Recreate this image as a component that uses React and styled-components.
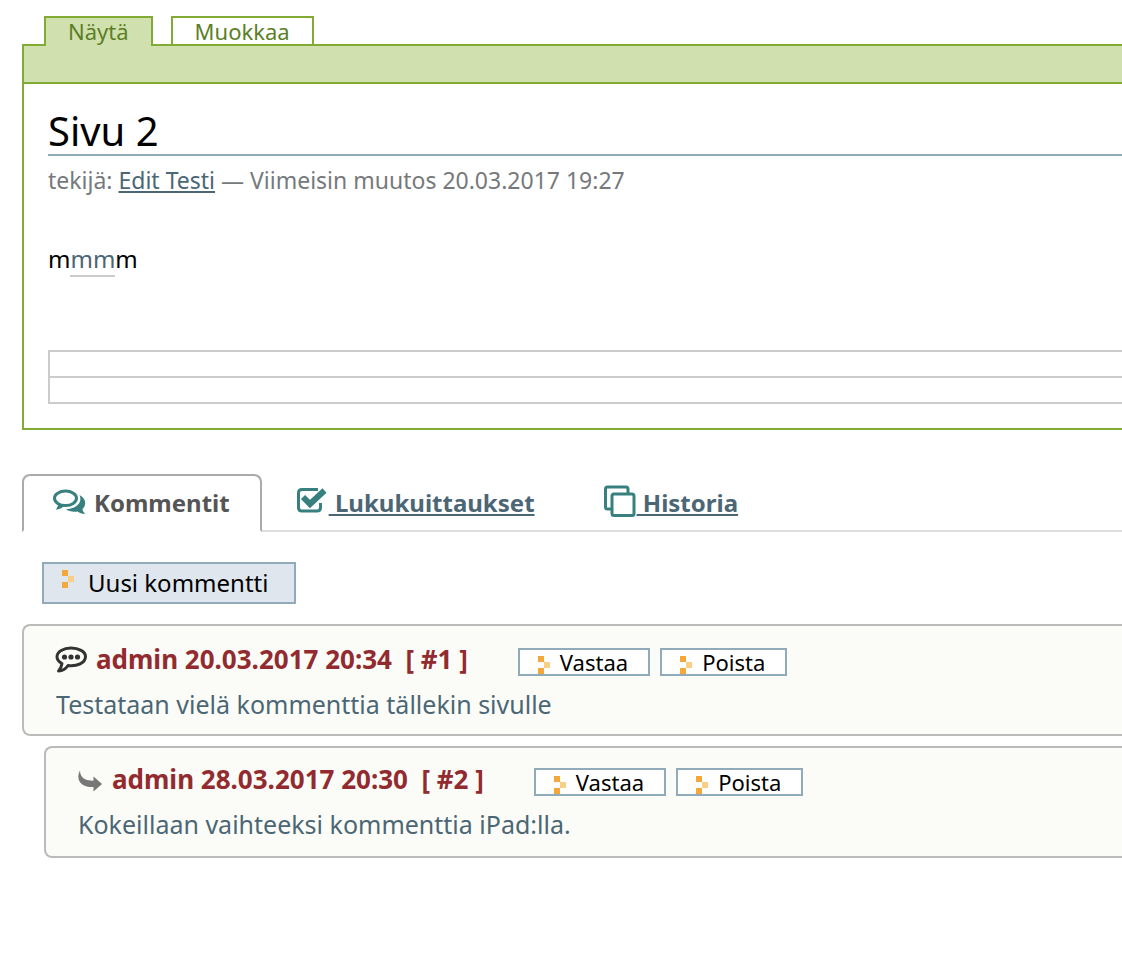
import React from 'react';
import styled, { createGlobalStyle } from 'styled-components';

const Global = createGlobalStyle`
  * { box-sizing: border-box; }
  body { margin: 0; background: #fff; color: #000; font-family: "Noto Sans", sans-serif; font-size: 24px; line-height: 32px; overflow-x: hidden; }
  a { color: #4b6675; }
  h1, h2, p { margin: 0; font-weight: 400; }
`;

const Page = styled.main`padding: 16px 0 32px 22px;`;

const ViewTabs = styled.nav`
  display: flex;
  gap: 18px;
  padding-left: 22px;
`;
const ViewTab = styled.a`
  && { color: #5c7f26; }
  text-decoration: none;
  height: ${p => (p.$active ? 30 : 28)}px;
  margin-bottom: ${p => (p.$active ? -2 : 0)}px;
  padding: 0 22px;
  line-height: 26px;
  font-size: 22px;
  border: 2px solid #82ab35;
  border-bottom: 0;
  background: ${p => (p.$active ? '#d0e0ae' : '#fff')};
`;
const Document = styled.section`
  border: 2px solid #82ab35;
  border-right: 0;
`;
const Toolbar = styled.div`
  height: 38px;
  background: #d0e0ae;
  border-bottom: 2px solid #82ab35;
`;
const Content = styled.div`padding: 24px 0 24px 24px;`;
const Title = styled.h1`
  && { font-size: 40px; }
  line-height: 46px;
  border-bottom: 2px solid #91abba;
`;
const Byline = styled.p`
  font-size: 23px;
  padding: 8px 0 47px;
  color: #76797c;
`;
const WikiLink = styled.a`
  text-decoration: none;
  border-bottom: 2px solid #ccc;
`;
const EmptyTable = styled.table`
  width: 100%;
  margin-top: 75px;
  border-collapse: collapse;
  td { height: 26px; padding: 0; border: 2px solid #ccc; border-right: 0; }
`;

const Tabs = styled.nav`
  display: flex;
  margin-top: 44px;
  border-bottom: 2px solid #ddd;
`;
const Tab = styled.a`
  display: flex;
  align-items: center;
  height: 58px;
  margin-bottom: -2px;
  padding: 0 ${p => (p.$active ? 30 : 33)}px;
  gap: ${p => (p.$active ? 8 : 0)}px;
  font-weight: 700;
  white-space: pre;
  && { color: ${p => (p.$active ? '#555' : '#4b6675')}; }
  text-decoration: ${p => (p.$active ? 'none' : 'underline')};
  border: 2px solid ${p => (p.$active ? '#aaa' : 'transparent')};
  border-bottom-color: ${p => (p.$active ? '#fff' : 'transparent')};
  border-radius: 8px 8px 0 0;
`;
const Icon = styled.svg`
  width: 32px;
  height: 32px;
  flex: none;
  overflow: visible;
  color: ${p => p.$color || '#37807f'};
`;

const Button = styled.button`
  display: flex;
  align-items: center;
  font: inherit;
  color: #000;
  border: 2px solid #91abba;
  border-radius: 0;
  cursor: pointer;
`;
const NewButton = styled(Button)`
  height: 42px;
  margin: 30px 0 20px 20px;
  padding: 0 26px 0 18px;
  gap: 12px;
  background: #dfe6ed;
`;
const SmallButton = styled(Button)`
  height: 28px;
  padding: 0 20px 0 18px;
  gap: 8px;
  font-size: 22px;
  line-height: 24px;
  background: #fff;
`;
const Marker = styled.svg`
  width: 14px;
  height: ${p => (p.$low ? 20 : 28)}px;
  flex: none;
  align-self: ${p => (p.$low ? 'flex-end' : 'flex-start')};
`;

const Comment = styled.article`
  height: 112px;
  margin: 0 0 10px ${p => (p.$reply ? 22 : 0)}px;
  padding: ${p => (p.$reply ? 14 : 16)}px 0 0 32px;
  border: 2px solid #bbb;
  border-right: 0;
  border-radius: 8px 0 0 8px;
  background: #fbfcf7;
  color: #4b6675;
`;
const CommentHead = styled.header`
  display: flex;
  align-items: center;
  gap: 8px;
`;
const Author = styled.h2`
  && { font-size: 26px; font-weight: 700; }
  color: #922b30;
  white-space: pre;
`;
const Actions = styled.div`
  display: flex;
  gap: 10px;
  margin-left: 42px;
  padding-top: 6px;
`;
const Body = styled.p`
  padding-top: 12px;
  font-size: 25px;
`;

const Arrow = ({ low }) => (
  <Marker $low={low} viewBox={low ? '0 0 14 20' : '0 -4 14 28'} aria-hidden="true">
    <path fill="#f4a83c" d="M0 2h6v6H0zM0 14h6v6H0z" />
    <path fill="#f8cf85" d="M6 8h6v6H6z" />
  </Marker>
);
const Comments = () => (
  <Icon viewBox="0 0 32 32" aria-hidden="true">
    <ellipse cx="11.500" cy="11.300" rx="11" ry="7.200" fill="none" stroke="currentColor" strokeWidth="3" />
    <path fill="currentColor" d="M4 16c.5 3-1 4.500-2 6.500 3.500 0 6-1.500 8-3.500z" />
    <path fill="currentColor" d="M25.500 8c7 3.500 7 10.500 3 14 0 2 1.500 3.500 2.500 5-3 0-5.500-1-7.500-2.500-4.500.6-9 0-11.500-2.500 9.500 0 17-6 13.500-14z" />
  </Icon>
);
const Check = () => (
  <Icon viewBox="0 0 32 32" aria-hidden="true">
    <path fill="none" stroke="currentColor" strokeWidth="3" d="M21 2.500H5Q1.500 2.500 1.500 6v14.500Q1.500 24 5 24h15q3.500 0 3.500-3.500V16" />
    <path fill="none" stroke="currentColor" strokeWidth="6" d="M6 10l7 7L27.500 3.500" />
  </Icon>
);
const Clone = () => (
  <Icon viewBox="0 0 32 32" aria-hidden="true">
    <g fill="none" stroke="currentColor" strokeWidth="3">
      <path d="M7 22H2.500q-2 0-2-2V2q0-2 2-2H21q2 0 2 2v4.500" />
      <rect x="7" y="7" width="22" height="21.500" rx="2" />
    </g>
  </Icon>
);
const Bubble = () => (
  <Icon $color="#333" viewBox="0 0 32 32" aria-hidden="true">
    <path fill="none" stroke="currentColor" strokeWidth="3" strokeLinejoin="round" d="M15 5C7.500 5 1 8.800 1 13.800c0 3 2 5.200 5 6.700-.5 3-1.500 5.500-3.500 7.500 4-.2 7.500-2.500 9.500-5.500 9 1 17.500-2.500 17.500-9C29.500 8.500 22.500 5 15 5z" />
    <g fill="currentColor"><circle cx="8.500" cy="14" r="2.600" /><circle cx="15" cy="14" r="2.600" /><circle cx="21.500" cy="14" r="2.600" /></g>
  </Icon>
);
const ReplyIcon = styled(Icon)`width: 26px;`;
const Reply = () => (
  <ReplyIcon $color="#777" viewBox="0 0 26 32" aria-hidden="true">
    <path fill="currentColor" d="M2 7.500C2 14 6 17.700 15.500 17.700V13.500L24 21l-8.500 7.500V24C4 25-3 17 2 7.500z" />
  </ReplyIcon>
);

function CommentCard({ icon, title, text, reply }) {
  return (
    <Comment $reply={reply}>
      <CommentHead>
        {icon}
        <Author>{title}</Author>
        <Actions>
          <SmallButton><Arrow low />Vastaa</SmallButton>
          <SmallButton><Arrow low />Poista</SmallButton>
        </Actions>
      </CommentHead>
      <Body>{text}</Body>
    </Comment>
  );
}

export default function App() {
  return (
    <>
      <Global />
      <Page>
        <ViewTabs>
          <ViewTab $active href="#view">Näytä</ViewTab>
          <ViewTab href="#edit">Muokkaa</ViewTab>
        </ViewTabs>
        <Document>
          <Toolbar />
          <Content>
            <Title>Sivu 2</Title>
            <Byline>tekijä: <a href="#author">Edit Testi</a> — Viimeisin muutos 20.03.2017 19:27</Byline>
            <p>m<WikiLink href="#mm">mm</WikiLink>m</p>
            <EmptyTable><tbody><tr><td /></tr><tr><td /></tr></tbody></EmptyTable>
          </Content>
        </Document>
        <Tabs>
          <Tab $active href="#comments"><Comments />Kommentit</Tab>
          <Tab href="#receipts"><Check /><span>{' Lukukuittaukset'}</span></Tab>
          <Tab href="#history"><Clone /><span>{' Historia'}</span></Tab>
        </Tabs>
        <NewButton><Arrow />Uusi kommentti</NewButton>
        <CommentCard icon={<Bubble />} title="admin 20.03.2017 20:34  [ #1 ]" text="Testataan vielä kommenttia tällekin sivulle" />
        <CommentCard reply icon={<Reply />} title="admin 28.03.2017 20:30  [ #2 ]" text="Kokeillaan vaihteeksi kommenttia iPad:lla." />
      </Page>
    </>
  );
}
